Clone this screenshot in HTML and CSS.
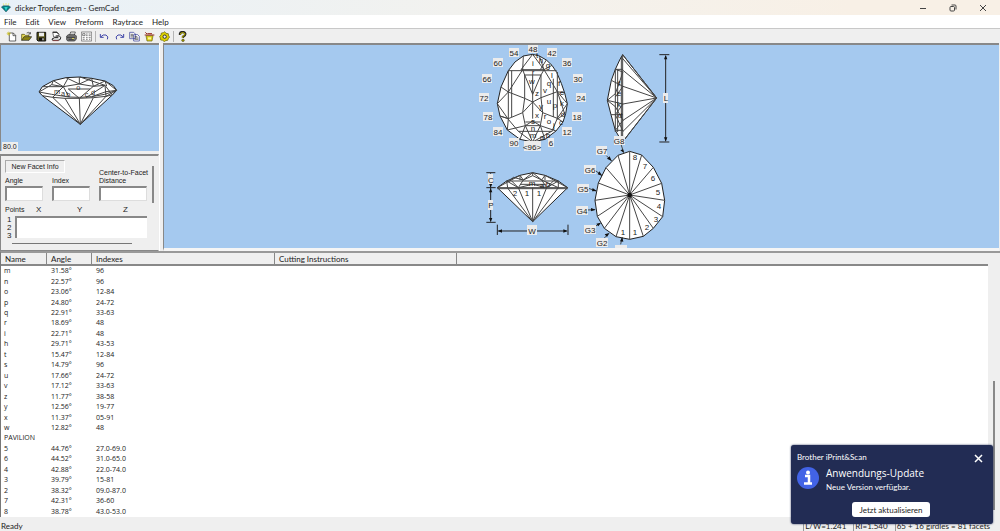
FILE: index.html
```html
<!DOCTYPE html>
<html lang="en">
<head>
<meta charset="utf-8">
<title>dicker Tropfen.gem - GemCad</title>
<link rel="stylesheet" href="styles.css">
</head>
<body>
<header class="titlebar">
  <svg class="app-icon" width="10" height="10" viewBox="0 0 30 30"><path d="M7 1l2 6M15 0v6M23 1l-2 6" stroke="#e8e850" stroke-width="2"/><path d="M1 12L7 8H23L29 12L15 27Z" fill="#087f84" stroke="#123" stroke-width="1"/><path d="M10 12h10l-5 12z" fill="#2ed5cc"/></svg>
  <h1 class="title">dicker Tropfen.gem - GemCad</h1>
  <div class="window-controls">
    <button aria-label="Minimize"><svg width="8" height="8" viewBox="0 0 8 8"><path d="M1 4.5h6"/></svg></button>
    <button aria-label="Restore"><svg width="8" height="8" viewBox="0 0 8 8"><rect x="1" y="2.500" width="4.500" height="4.500" rx="1"/><path d="M2.500 1h3.500q1 0 1 1v3.500"/></svg></button>
    <button aria-label="Close"><svg width="8" height="8" viewBox="0 0 8 8"><path d="M1 1l6 6M7 1L1 7"/></svg></button>
  </div>
</header>
<nav class="menu">
  <button>File</button><button>Edit</button><button>View</button><button>Preform</button><button>Raytrace</button><button>Help</button>
</nav>
<div class="toolbar">
  <button aria-label="New"><svg viewBox="0 0 33 33"><path d="M10 6h12l7 7v17H10z" fill="#fff" stroke="#222" stroke-width="2"/><path d="M21 6v8h8" fill="none" stroke="#222" stroke-width="2"/><path d="M8 2v12M2 8h12M4 4l8 8M12 4l-8 8" stroke="#c8bd22" stroke-width="2"/></svg></button>
  <button aria-label="Open"><svg viewBox="0 0 33 33"><path d="M2 28V10h8l3 3h11v5" fill="#e9dc55" stroke="#443f00" stroke-width="2"/><path d="M2 28l7-11h23l-8 11z" fill="#8c8412" stroke="#222" stroke-width="2"/><path d="M17 6q7-5 11 2m0-5v6h-6" fill="none" stroke="#222" stroke-width="2"/></svg></button>
  <button aria-label="Save"><svg viewBox="0 0 33 33"><path d="M3 4h26v26H6l-3-3z" fill="#58541a" stroke="#111" stroke-width="3"/><path d="M9 5h15v11H9z" fill="#eee"/><path d="M9 20h16v9H9z" fill="#111"/><path d="M19 22h4v6h-4z" fill="#ddd"/></svg></button>
  <button aria-label="Print setup"><svg viewBox="0 0 33 33"><path d="M5 3h13l6 7-6 8H8z" fill="#fff" stroke="#333" stroke-width="2"/><path d="M6 4h12l5 6M14 15q14-2 15 5t-8 8H5l-2-4 8-4h11" fill="none" stroke="#222" stroke-width="3"/><path d="M5 29h18" stroke="#a44" stroke-width="2"/></svg></button>
  <button aria-label="Print"><svg viewBox="0 0 33 33"><path d="M10 15l4-12h14l-4 12" fill="#fff" stroke="#222" stroke-width="2"/><path d="M2 15l5-4h20l4 4v9l-5 6H5l-3-4z" fill="#777" stroke="#222" stroke-width="2"/><path d="M3 19h24M8 25h15" stroke="#222" stroke-width="2"/><path d="M14 7h10M13 11h10" stroke="#555"/><path d="M18 21h6v3h-6z" fill="#d9d05a"/></svg></button>
  <button aria-label="Print preview"><svg viewBox="0 0 33 33"><path d="M1 3h31v27H1z" fill="#fff" stroke="#555" stroke-width="2"/><path d="M5 8h7v6H5zM15 9h5M23 9h6M15 14h5M23 14h6M5 20h6M15 20h5M23 20h6M5 25h6M15 25h5M24 25h4" fill="none" stroke="#444" stroke-width="2"/></svg></button>
  <span class="separator"></span>
  <button aria-label="Undo"><svg viewBox="0 0 33 33"><path d="M4 9v10h10M5 18q7-9 16-6 9 5 4 13" fill="none" stroke="#3f45a8" stroke-width="3"/></svg></button>
  <button aria-label="Redo"><svg viewBox="0 0 33 33"><path d="M29 9v10H19M28 18q-7-9-16-6-9 5-4 13" fill="none" stroke="#3f45a8" stroke-width="3"/></svg></button>
  <button aria-label="Copy"><svg viewBox="0 0 33 33"><path d="M2 4h12l5 5v14H2zM14 11h12l5 5v14H14z" fill="#fff" stroke="#29308f" stroke-width="2"/><path d="M5 10h8M5 14h8M5 18h8M17 17h8M17 21h11M17 25h11" stroke="#333" stroke-width="2"/></svg></button>
  <button aria-label="Render"><svg viewBox="0 0 33 33"><path d="M6 14h21l-3 16H9z" fill="#ddd022" stroke="#65600b" stroke-width="2"/><path d="M2 12h29M10 8h14M4 4l5 5" stroke="#932a21" stroke-width="3"/><path d="M12 19h9v6h-9z" fill="#fff59a"/></svg></button>
  <button aria-label="Settings"><svg viewBox="0 0 33 33"><path d="M17 2l4 5 7 1 1 7 3 3-4 5-2 5-6 1-4 3-5-4-6-1-1-6-2-5 4-4 1-6 6-1z" fill="#ddd000" stroke="#625d00" stroke-width="2"/><circle cx="17" cy="17" r="5" fill="#eee" stroke="#333" stroke-width="3"/></svg></button>
  <span class="separator"></span>
  <button aria-label="Help"><svg viewBox="0 0 33 33"><path d="M9 12V8q1-5 8-5t8 6q0 4-7 8v4" fill="none" stroke="#222" stroke-width="7"/><path d="M10 11V9q1-4 7-4t7 4q0 4-7 7v5" fill="none" stroke="#c4b900" stroke-width="3"/><circle cx="18" cy="28" r="4" fill="#9a9000" stroke="#222" stroke-width="1"/></svg></button>
</div>
<main class="workspace">
  <aside class="side">
    <section class="preview">
      <svg viewBox="0 0 474 318" preserveAspectRatio="xMidYMid meet" class="drawing" role="img" aria-label="Gem preview">
        <g transform="translate(-3 -3)">
        <path class="gem" d="M117 144L127 128 160 110 198 101 238 99 275 103 315 111 340 125 350 139 337 153 241 241 127 155Z"/>
        <path class="edge" d="M127 155L158 160 195 163 238 163 280 161 318 157 337 153M117 144L155 151 207 159 238 160 275 158 314 151 350 139M158 160L241 241 195 163M238 163L241 241 280 161M241 241L318 157M117 144L155 122 190 128 238 120 280 127 315 111M127 128L190 128 158 160M155 122L160 110 190 128 204 103M238 99V120L198 101M238 120L275 103 280 127M240 99L315 124 337 153M280 127L315 124 318 157 350 139 315 111 320 126M205 135H270M190 128L207 159M205 135L238 163 280 127M258 161L315 124M275 158L318 143 350 139"/>
        <g class="large-letters"><text x="162" y="149">m</text><text x="183" y="157">a</text><text x="199" y="159">b</text><text x="229" y="137">o</text><text x="254" y="158">c</text><text x="273" y="153">d</text></g>
        </g>
      </svg>
      <span class="zoom-value">80.0</span>
    </section>
    <form class="facet-panel">
      <button type="button" class="facet-button">New Facet Info</button>
      <div class="facet-fields">
        <label>Angle<input type="text"></label>
        <label>Index<input type="text"></label>
        <label>Center-to-Facet<br>Distance<input type="text"></label>
      </div>
      <div class="point-head"><label for="points">Points</label><span>X</span><span>Y</span><span>Z</span></div>
      <div class="point-box"><span class="line-numbers">1<br>2<br>3</span><textarea id="points"></textarea></div>
      <span class="panel-scroll-y"></span><span class="panel-scroll-x"></span>
    </form>
  </aside>
  <section class="canvas">
    <svg class="diagram" viewBox="164 45 835 203" preserveAspectRatio="xMidYMid meet" role="img" aria-label="Gem projections">
      <g transform="translate(470 42) scale(.33333)">
        <path class="gem" d="M188 37L208 42 229 54 246 70 260 91 274 124 284 153 292 185 287 215 279 240 258 267 225 292 188 300 150 292 112 264 90 222 82 185 93 135 115 86 135 60 160 42Z"/>
        <path class="edge" d="M188 37L153 83H222L188 37M160 42L158 83M208 42L222 83 246 70M229 54L211 83M115 86H260M158 83L164 99H213L222 83M158 83L115 150 93 135M164 99L188 157 213 99M164 99V169L188 180 213 167V99M188 99V230M115 86V232L145 268M125 86V225M115 150L164 169 158 212 188 180 218 212 213 167 262 149 222 83M262 149V232L284 215 262 149M250 110V225M82 185L115 150M115 230L90 222M115 230L158 212 166 251H211L218 212 262 229 245 270M166 240H211M166 251L188 237 211 251 225 292M166 251L150 292M112 264L166 251L188 300 211 251 258 267M145 268H245L188 300ZM82 185L115 232M262 229L279 240M284 153L262 149L292 185 262 229M262 90L262 149M90 222L115 230 112 264"/>
      </g>
      <g transform="translate(580 42) scale(.33333)">
        <path class="gem" d="M128 38L230 168 130 297 120 289 106 265 93 218 82 175 94 115 106 82 119 54Z"/>
        <path class="edge" d="M128 38V297M124 45V285M128 38L230 168L129 85M230 168L129 133M230 168L129 186M230 168L129 235M230 168L129 268M230 168L130 297M124 45L230 168M106 82L129 90 106 155 82 175 106 194 129 235 106 265M94 115L129 133 106 165M82 175L129 186 106 218 129 268M93 218H129M106 82V270M113 82V270M106 82H129M106 265H129"/>
        <path class="edge dimension" d="M238 38H268M238 300H268M257 42V296"/><path class="arrow" d="M257 39l-5 13h10zM257 299l-5-13h10z"/>
      </g>
      <g transform="translate(470 145) scale(.33333)">
        <path class="gem" d="M82 128L110 108 150 91 188 83 225 91 265 108 293 128 188 230Z"/>
        <path class="edge" d="M82 128H293M82 131H293M112 128L188 230 145 128M188 128V230L230 128M188 230L265 128M82 128L150 91 160 105 188 92 215 105 225 91 293 128M110 108H265M150 118H228M118 108L130 97 160 105 145 128 110 108 113 128M265 108V128L215 105 230 128M160 105L188 83 215 105M145 128L188 118 230 128 265 108M150 91V105M225 91V105M188 83V92M145 128L125 108M230 128L250 108"/>
        <path class="edge dimension" d="M49 83H76M49 128H77M49 232H77M62 86V229M82 239V270M294 239V270M85 258H290"/><path class="arrow" d="M62 84l-5 12h10zM62 127l-5-11h10zM62 130l-5 12h10zM62 231l-5-12h10zM83 258l13-5v10zM293 258l-13-5v10z"/>
      </g>
      <g transform="translate(570 145) scale(.33333)">
        <path class="gem" d="M179 19L215 30 250 67 275 115 284 166 278 215 250 250 220 274 179 283 138 275 103 250 82 214 75 166 85 114 108 68 144 31Z"/>
        <path class="edge" d="M179 19V283M215 30L179 150 138 275M250 67L179 150 103 250M275 115L179 150 82 214M284 166L179 150 75 166M278 215L179 150 85 114M250 250L179 150 108 68M220 274L179 150 144 31M153 -2L161 22"/>
        <circle cx="179" cy="150" r="7" fill="#111"/>
        <path class="edge" d="M109 32L125 48M78 78L96 92M53 129L78 138M52 195L75 194M73 246L91 234M102 280L116 266M152 298L156 278"/>
        <path class="arrow" d="M162 24l-11-8 8-3zM125 48l-14-7 8-7zM97 93l-14-5 5-9zM80 138l-14 1 2-10zM77 194l-14-5v10zM93 233l-14 3 6 8zM118 264l-14 4 7 8zM157 276l-7 13 10 1z"/>
      </g>
      <path class="label-bg" d="M528 44h10v9h-10zM509 48h10v9h-10zM547 48h10v9h-10zM493 58h10v9h-10zM562 58h10v9h-10zM482 74h10v9h-10zM573 74h10v9h-10zM479 93h10v9h-10zM576 93h10v9h-10zM483 112h10v9h-10zM572 112h10v9h-10zM493 127h10v9h-10zM562 127h10v9h-10zM509 138h10v9h-10zM548 138h6v9h-6zM524 141h17v10h-17zM663 93h5v10h-5zM614 136h11v9h-11zM488 174h5v10h-5zM488 200h5v10h-5zM527 225h10v10h-10zM596 146h11v9h-11zM584 165h12v9h-12zM577 184h12v9h-12zM576 206h12v9h-12zM584 225h12v9h-12zM596 238h12v9h-12zM615 245h12v9h-12z"/>
      <g class="labels">
        <text x="533" y="52">48</text><text x="514" y="56">54</text><text x="552" y="56">42</text><text x="498" y="66">60</text><text x="567" y="66">36</text><text x="487" y="82">66</text><text x="578" y="82">30</text><text x="484" y="101">72</text><text x="581" y="101">24</text><text x="488" y="120">78</text><text x="577" y="120">18</text><text x="498" y="135">84</text><text x="567" y="135">12</text><text x="514" y="146">90</text><text x="551" y="146">6</text><text x="532" y="150">&lt;96&gt;</text>
        <text x="666" y="101">L</text><text x="619" y="144">G8</text><text x="491" y="183">C</text><text x="491" y="208">P</text><text x="532" y="234">W</text>
        <text x="602" y="154">G7</text><text x="590" y="173">G6</text><text x="583" y="192">G5</text><text x="582" y="214">G4</text><text x="590" y="233">G3</text><text x="602" y="246">G2</text><text x="621" y="253">G1</text>
        <text x="635" y="160">8</text><text x="645" y="169">7</text><text x="653" y="181">6</text><text x="658" y="195">5</text><text x="659" y="209">4</text><text x="656" y="222">3</text><text x="647" y="230">2</text><text x="635" y="235">1</text><text x="623" y="235">1</text>
        <text x="515" y="196">2</text><text x="527" y="196">1</text><text x="539" y="196">1</text>
      </g>
      <g class="letters">
        <text x="533" y="66">i</text><text x="533" y="75">r</text><text x="532" y="84">w</text><text x="537" y="96">z</text><text x="545" y="93">v</text><text x="549" y="86">q</text><text x="552" y="78">l</text><text x="548" y="68">g</text><text x="541" y="63">h</text><text x="537" y="58">t</text><text x="559" y="86">f</text><text x="562" y="95">e</text><text x="549" y="104">u</text><text x="555" y="108">p</text><text x="562" y="106">k</text><text x="541" y="109">y</text><text x="537" y="118">x</text><text x="545" y="119">r</text><text x="549" y="124">o</text><text x="563" y="117">d</text><text x="561" y="125">c</text><text x="554" y="128">j</text><text x="533" y="124">s</text><text x="533" y="131">n</text><text x="533" y="138">m</text><text x="542" y="140">a</text><text x="548" y="138">b</text>
        <text x="619" y="86">f</text><text x="619" y="96">e</text><text x="619" y="107">k</text><text x="620" y="118">d</text><text x="532" y="186">m</text><text x="542" y="188">a</text><text x="548" y="187">b</text>
      </g>
    </svg>
  </section>
</main>
<section class="facet-list">
  <table>
    <thead><tr><th class="name">Name</th><th class="angle">Angle</th><th class="indexes">Indexes</th><th class="instructions">Cutting Instructions</th><th></th></tr></thead>
    <tbody>
      <tr><td>m</td><td>31.58°</td><td>96</td></tr>
      <tr><td>n</td><td>22.57°</td><td>96</td></tr>
      <tr><td>o</td><td>23.06°</td><td>12-84</td></tr>
      <tr><td>p</td><td>24.80°</td><td>24-72</td></tr>
      <tr><td>q</td><td>22.91°</td><td>33-63</td></tr>
      <tr><td>r</td><td>18.69°</td><td>48</td></tr>
      <tr><td>i</td><td>22.71°</td><td>48</td></tr>
      <tr><td>h</td><td>29.71°</td><td>43-53</td></tr>
      <tr><td>t</td><td>15.47°</td><td>12-84</td></tr>
      <tr><td>s</td><td>14.79°</td><td>96</td></tr>
      <tr><td>u</td><td>17.66°</td><td>24-72</td></tr>
      <tr><td>v</td><td>17.12°</td><td>33-63</td></tr>
      <tr><td>z</td><td>11.77°</td><td>38-58</td></tr>
      <tr><td>y</td><td>12.56°</td><td>19-77</td></tr>
      <tr><td>x</td><td>11.37°</td><td>05-91</td></tr>
      <tr><td>w</td><td>12.82°</td><td>48</td></tr>
      <tr><td>PAVILION</td><td></td><td></td></tr>
      <tr><td>5</td><td>44.76°</td><td>27.0-69.0</td></tr>
      <tr><td>6</td><td>44.52°</td><td>31.0-65.0</td></tr>
      <tr><td>4</td><td>42.88°</td><td>22.0-74.0</td></tr>
      <tr><td>3</td><td>39.79°</td><td>15-81</td></tr>
      <tr><td>2</td><td>38.32°</td><td>09.0-87.0</td></tr>
      <tr><td>7</td><td>42.31°</td><td>36-60</td></tr>
      <tr><td>8</td><td>38.78°</td><td>43.0-53.0</td></tr>
    </tbody>
  </table>
  <div class="scrollbar"><span class="thumb"></span></div>
</section>
<footer class="status"><span class="ready">Ready</span><span>L/W=1.241</span><span>RI=1.540</span><span>65 + 16 girdles = 81 facets</span></footer>
<div class="toast" role="alert">
  <div class="toast-source">Brother iPrint&amp;Scan</div>
  <button class="toast-close" aria-label="Close notification"><svg width="10" height="10" viewBox="0 0 10 10"><path d="M1 1l7 7M8 1L1 8" stroke="#fff" stroke-width="1.500"/></svg></button>
  <svg class="info" width="22" height="22" viewBox="0 0 22 22"><circle cx="11" cy="11" r="11" fill="#4263e6"/><circle cx="11" cy="5.500" r="2" fill="#fff"/><path d="M8 9h4v7M7 16.500h8" stroke="#fff" stroke-width="2.500" fill="none"/></svg>
  <div class="toast-copy"><h2>Anwendungs-Update</h2><p>Neue Version verfügbar.</p></div>
  <button class="update">Jetzt aktualisieren</button>
</div>
</body>
</html>
```
FILE: styles.css
```css
* { box-sizing: border-box; }
body {
  margin: 0;
  height: 100vh;
  display: flex;
  flex-direction: column;
  overflow: hidden;
  background: #efefef;
  color: #222;
  font: 8px/10px Lato, "Open Sans", sans-serif;
}
button { padding: 0; border: 0; background: none; color: inherit; font: inherit; }
svg { display: block; }
.titlebar { flex: 0 0 15px; display: flex; align-items: center; padding: 0 8px 0 1px; gap: 4px; background: linear-gradient(90deg, #e8f1f8, #f3f2ee 50%, #f8f0e6 85%); }
.title { margin: 0; font-size: 8px; font-weight: 400; line-height: 12px; }
.window-controls { margin-left: auto; display: flex; gap: 22px; padding-right: 5px; }
.window-controls svg { fill: none; stroke: #444; stroke-width: 1; }
.menu { flex: 0 0 13px; display: flex; align-items: center; gap: 9px; padding: 0 4px; background: #fff; }
.toolbar { flex: 0 0 15px; display: flex; align-items: center; gap: 4px; padding: 0 6px; border-top: 1px solid #c8c8c8; }
.toolbar svg { width: 11px; height: 11px; }
.separator { width: 1px; height: 11px; margin: 0 -1px; background: #b5b5b5; }
.workspace { flex: 0 0 208px; min-height: 0; display: flex; gap: 3px; padding-right: 1px; }
.side { flex: 0 0 160px; display: flex; flex-direction: column; gap: 3px; border-right: 1px solid #fff; }
.preview { flex: 0 0 108px; position: relative; background: #a5c9ef; border-top: 2px solid #888; border-left: 1px solid #888; }
.drawing { width: 100%; height: 100%; }
.gem { fill: #fff; stroke: #222; stroke-width: 3; stroke-linejoin: round; }
.edge { fill: none; stroke: #444; stroke-width: 3; }
.dimension { stroke: #222; }
.arrow { fill: #111; }
.label-bg { fill: #ececec; }
.labels, .letters { font-family: "Liberation Sans", sans-serif; font-size: 8px; fill: #222; text-anchor: middle; }
.large-letters { font: 22px "Liberation Sans", sans-serif; fill: #333; }
.zoom-value { position: absolute; left: 1px; bottom: 0; padding: 0 1px; background: #eee; font: 7px/9px "Liberation Sans", sans-serif; }
.facet-panel { position: relative; flex: 1; min-height: 0; padding: 4px 11px 8px 4px; border: solid #888; border-width: 2px 1px 1px; font: 7px/8px "Liberation Sans", sans-serif; overflow: hidden; border-right-color: #eee; }
.facet-button { display: block; height: 13px; width: 60px; border: solid #aaa; border-width: 1px 0 0 1px; border-right: 1px solid #fff; border-bottom: 1px solid #fff; line-height: 10px; }
.facet-fields { display: grid; grid-template-columns: 38px 38px 48px; gap: 9px; align-items: end; margin-top: -4px; }
.facet-fields label { white-space: nowrap; }
.facet-fields input { display: block; width: 100%; height: 15px; padding: 1px; margin-top: 1px; border: solid #888; border-width: 2px 1px 1px 2px; border-right-color: #ddd; border-bottom-color: #ddd; background: #fff; font: inherit; }
.point-head { display: grid; grid-template-columns: 31px 41px 46px 1fr; padding-top: 5px; height: 15px; }
.point-head span { font-size: 8px; }
.point-box { display: flex; height: 22px; overflow: hidden; }
.line-numbers { width: 10px; padding-left: 2px; font-size: 8px; }
.point-box textarea { flex: 1; min-width: 0; padding: 2px; resize: none; background: #fff; border: solid #888; border-width: 2px 0 0 2px; font: inherit; }
.panel-scroll-y { position: absolute; right: 4px; top: 10px; width: 2px; height: 37px; background: #888; }
.panel-scroll-x { position: absolute; left: 11px; bottom: 6px; width: 120px; height: 1px; background: #777; }
.canvas { flex: 1; min-width: 0; background: #a5c9ef; border-top: 2px solid #888; border-left: 1px solid #888; border-bottom: 3px solid #f5f5f5; }
.diagram { width: 100%; height: 100%; }
.facet-list { flex: 1; min-height: 0; display: flex; padding-right: 1px; border-top: 2px solid #999; border-left: 1px solid #777; background: linear-gradient(#efefef, #efefef) right / 1px no-repeat, #fff; }
.facet-list table { flex: 1; height: 100%; border-collapse: separate; border-spacing: 0; table-layout: fixed; }
.facet-list th { height: 13px; padding: 1px 0 0 4px; text-align: left; font-weight: 400; line-height: 10px; background: #efefef; border-right: 1px solid #888; border-bottom: 2px solid #888; }
.facet-list th:last-child { border-right: 0; }
.name { width: 46px; }
.angle { width: 45px; }
.indexes { width: 183px; }
.instructions { width: 182px; }
.facet-list td { padding: 0 0 0 4px; font: 7px/10px "Open Sans", "Noto Sans", sans-serif; white-space: nowrap; }
.facet-list td:first-child { padding-left: 3px; }
.scrollbar { flex: 0 0 11px; display: flex; flex-direction: column; justify-content: flex-end; align-items: center; background: #efefef; }
.thumb { width: 2px; height: 49%; margin-bottom: 7px; background: #888; }
.status { flex: 0 0 14px; display: flex; gap: 7px; align-items: center; padding: 3px 10px 0 1px; }
.status span { border-left: 1px solid #999; padding-left: 1px; }
.status .ready { margin-right: auto; border: 0; padding: 0; }
.toast { position: absolute; right: 7px; bottom: 7px; width: 202px; display: grid; grid-template-columns: 22px 1fr 12px; column-gap: 7px; padding: 7px 8px 7px 6px; border-radius: 3px; background: #222c54; color: #fff; box-shadow: 0 0 2px #222c54; }
.toast-source { grid-column: 1 / 3; line-height: 10px; }
.toast-close { grid-column: 3; grid-row: 1 / 3; align-self: start; padding: 2px 0 0 1px; }
.info { margin-top: 5px; }
.toast-copy { padding-top: 4px; }
.toast h2 { margin: 0; font: 10px/14px "Open Sans", "Noto Sans", sans-serif; }
.toast p { margin: 0; line-height: 14px; }
.update { grid-column: 1 / 4; justify-self: center; width: 78px; height: 15px; margin-top: 8px; border-radius: 3px; background: #fff; color: #222; }
```
